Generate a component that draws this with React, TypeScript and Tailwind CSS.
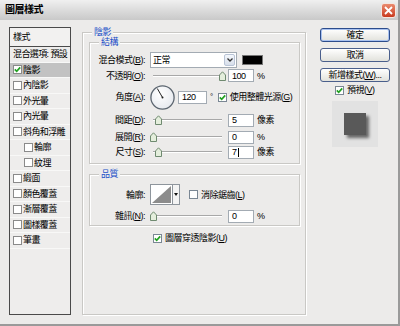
import type { ReactNode } from 'react';

function Key({ k }: { k: string }) {
  return (
    <>
      (<span className="underline">{k}</span>)
    </>
  );
}

function Check({ checked, className = '' }: { checked?: boolean; className?: string }) {
  return (
    <span className={`flex h-[9px] w-[9px] shrink-0 items-center justify-center border border-[#7A8794] bg-white ${className}`}>
      {checked && (
        <svg width="7" height="7" viewBox="0 0 7 7">
          <path d="M0.8 3.4 L2.7 5.3 L6.2 1.4" fill="none" stroke="#21A121" strokeWidth="1.7" />
        </svg>
      )}
    </span>
  );
}

function Thumb({ left }: { left: number }) {
  return (
    <svg className="absolute top-[2px]" style={{ left }} width="7" height="10" viewBox="0 0 7 10">
      <path d="M0.5 9.5 V4 L3.5 0.8 L6.5 4 V9.5 Z" fill="#E4EEDC" stroke="#6F8A70" />
    </svg>
  );
}

function Slider({ pos }: { pos: number }) {
  return (
    <div className="relative h-[14px] w-[74px] shrink-0">
      <div className="absolute left-[3px] right-[2px] top-[6px] h-[2px] border-t border-b border-t-[#A8A8A8] border-b-white" />
      <Thumb left={pos} />
    </div>
  );
}

function Field({ value, w = 'w-[26px]', caret }: { value: string; w?: string; caret?: boolean }) {
  return (
    <div className={`flex h-[13px] shrink-0 items-center border border-[#A3ABB3] bg-white pl-[3px] text-[9px] ${w}`}>
      {value}
      {caret && <span className="ml-[1px] h-[9px] w-px bg-black" />}
    </div>
  );
}

function Label({ children }: { children: ReactNode }) {
  return <div className="w-[56px] shrink-0 whitespace-nowrap pr-[1px] text-right">{children}</div>;
}

function SliderRow({ label, pos, value, unit, h, caret }: { label: ReactNode; pos: number; value: string; unit: string; h: string; caret?: boolean }) {
  return (
    <div className={`flex items-center ${h}`}>
      <Label>{label}</Label>
      <div className="ml-[4px]">
        <Slider pos={pos} />
      </div>
      <div className="ml-[4px]">
        <Field value={value} caret={caret} />
      </div>
      <span className="ml-[3px]">{unit}</span>
    </div>
  );
}

function Group({ title, className, children }: { title: string; className: string; children: ReactNode }) {
  return (
    <div className={`relative shrink-0 border border-[#C9C8C5] shadow-[inset_1px_1px_0_#fff,1px_1px_0_#fff] ${className}`}>
      <span className="absolute left-[9px] top-[-7px] bg-[#ECEBEA] px-[2px] leading-[12px] text-[#2150C8]">{title}</span>
      {children}
    </div>
  );
}

function Dial() {
  return (
    <svg width="25" height="25" viewBox="0 0 25 25" className="shrink-0">
      <defs>
        <radialGradient id="dialFill" cx="0.4" cy="0.35" r="0.7">
          <stop offset="0" stopColor="#ffffff" />
          <stop offset="1" stopColor="#E6E9EE" />
        </radialGradient>
      </defs>
      <circle cx="12.5" cy="12.5" r="11.6" fill="url(#dialFill)" stroke="#5C6670" strokeWidth="1.3" />
      <line x1="12.5" y1="12.5" x2="7.3" y2="3.5" stroke="#222" strokeWidth="1" />
      <circle cx="12.5" cy="12.5" r="1" fill="#222" />
    </svg>
  );
}

const styles: { name: string; checked?: boolean; indent?: boolean; selected?: boolean; plain?: boolean }[] = [
  { name: '混合選項: 預設', plain: true },
  { name: '陰影', checked: true, selected: true },
  { name: '內陰影' },
  { name: '外光暈' },
  { name: '內光暈' },
  { name: '斜角和浮雕' },
  { name: '輪廓', indent: true },
  { name: '紋理', indent: true },
  { name: '緞面' },
  { name: '顏色覆蓋' },
  { name: '漸層覆蓋' },
  { name: '圖樣覆蓋' },
  { name: '筆畫' },
];

function Button({ children, main }: { children: ReactNode; main?: boolean }) {
  return (
    <div
      className={`flex h-[14px] items-center justify-center rounded-[3px] border bg-gradient-to-b from-white to-[#E2E2DC] text-[9px] leading-none ${
        main ? 'border-[#2C4C8C] shadow-[inset_0_0_0_1px_#A9C2F0]' : 'border-[#4A5F8C]'
      }`}
    >
      {children}
    </div>
  );
}

export default function App() {
  return (
    <div className="flex h-[326px] w-[400px] flex-col overflow-hidden border-r-[2px] border-b-[2px] border-r-[#9A9A9A] border-b-[#9A9A9A] bg-[#ECEBEA] font-['Liberation_Sans','Noto_Sans_CJK_TC',sans-serif] text-[9px] leading-[12px] tracking-[-0.5px] text-black">
      {/* title bar */}
      <div className="flex h-[20px] shrink-0 items-center justify-between bg-gradient-to-b from-[#F0F0F0] via-[#DCDCDC] to-[#C9C9C9] pl-[5px] pr-[2px]">
        <span className="text-[10px] font-bold tracking-[-0.5px]">圖層樣式</span>
        <div className="flex h-[15px] w-[15px] items-center justify-center rounded-[3px] border border-[#F4E6E0] bg-gradient-to-b from-[#E98A6E] to-[#C8381C]">
          <svg width="9" height="9" viewBox="0 0 9 9">
            <path d="M1 1 L8 8 M8 1 L1 8" stroke="#fff" strokeWidth="1.8" />
          </svg>
        </div>
      </div>

      <div className="flex flex-1">
        {/* styles list */}
        <div className="ml-[9px] mt-[7px] h-[288px] w-[62px] shrink-0 overflow-hidden border border-[#4A4A4A] bg-[#EEEDEC]">
          <div className="flex h-[19px] items-center border-b border-[#4A4A4A] bg-[#F2F1F0] pl-[3px]">樣式</div>
          {styles.map((s) => (
            <div
              key={s.name}
              className={`flex h-[15.5px] items-center overflow-hidden whitespace-nowrap border-b border-[#F8F8F7] tracking-[-0.6px] ${s.selected ? 'bg-[#C2C2C2]' : ''} ${
                s.plain ? 'pl-[3px]' : s.indent ? 'pl-[14px]' : 'pl-[3px]'
              }`}
            >
              {!s.plain && <Check checked={s.checked} className="mr-[1px] border-[#8A8A8A]" />}
              <span>{s.name}</span>
            </div>
          ))}
        </div>

        {/* main panel */}
        <Group title="陰影" className="ml-[11px] mt-[12px] h-[283px] w-[224px]">
          <Group title="結構" className="ml-[6px] mt-[9px] h-[122px] w-[211px]">
            <div className="flex flex-col pt-[9px]">
              <div className="flex h-[16px] items-center">
                <Label>
                  混合模式<Key k="B" />:
                </Label>
                <div className="ml-[4px] flex h-[16px] w-[87px] items-center border border-[#A3ABB3] bg-white pl-[2px]">
                  <span className="flex-1">正常</span>
                  <div className="mr-px flex h-[12px] w-[11px] items-center justify-center rounded-[2px] border border-[#B9C4D6] bg-gradient-to-b from-[#F4F7FC] to-[#D7DEEA]">
                    <svg width="6" height="4" viewBox="0 0 6 4">
                      <path d="M0.5 0.5 L3 3 L5.5 0.5" fill="none" stroke="#333" strokeWidth="1.3" />
                    </svg>
                  </div>
                </div>
                <div className="ml-[5px] h-[10px] w-[21px] border border-[#777] bg-black" />
              </div>
              <SliderRow label={<>不透明<Key k="O" />:</>} pos={69} value="100" unit="%" h="h-[15px]" />
              <div className="flex h-[28px] items-center">
                <Label>
                  角度<Key k="A" />:
                </Label>
                <div className="ml-[4px]">
                  <Dial />
                </div>
                <div className="ml-[3px]">
                  <Field value="120" w="w-[29px]" />
                </div>
                <span className="ml-[3px] self-start pt-[8px] text-[8px]">°</span>
                <Check checked className="ml-[5px]" />
                <span className="ml-[3px] whitespace-nowrap">
                  使用整體光源<Key k="G" />
                </span>
              </div>
              <SliderRow label={<>間距<Key k="D" />:</>} pos={5} value="5" unit="像素" h="h-[18px]" />
              <SliderRow label={<>展開<Key k="R" />:</>} pos={0} value="0" unit="%" h="h-[16px]" />
              <SliderRow label={<>尺寸<Key k="S" />:</>} pos={5} value="7" unit="像素" h="h-[14px]" caret />
            </div>
          </Group>

          <Group title="品質" className="ml-[6px] mt-[10px] h-[52px] w-[211px]">
            <div className="flex flex-col pt-[9px]">
              <div className="flex h-[21px] items-center">
                <Label>輪廓:</Label>
                <div className="ml-[4px] flex h-[21px] w-[30px] border border-[#8E959C] bg-white">
                  <svg width="21" height="19" viewBox="0 0 21 19" className="shrink-0">
                    <path d="M1 18 L20 1 L20 18 Z" fill="#8C8C8C" />
                  </svg>
                  <div className="flex flex-1 items-center justify-center border-l border-[#8E959C] bg-[#F4F4F4]">
                    <svg width="4" height="3" viewBox="0 0 4 3">
                      <path d="M0 0 H4 L2 3 Z" fill="#111" />
                    </svg>
                  </div>
                </div>
                <Check className="ml-[9px]" />
                <span className="ml-[3px] whitespace-nowrap">
                  消除鋸齒<Key k="L" />
                </span>
              </div>
              <div className="mt-[4px]">
                <SliderRow label={<>雜訊<Key k="N" />:</>} pos={0} value="0" unit="%" h="h-[14px]" />
              </div>
            </div>
          </Group>

          <div className="ml-[70px] mt-[5px] flex h-[14px] items-center">
            <Check checked />
            <span className="ml-[3px] whitespace-nowrap">
              圖層穿透陰影<Key k="U" />
            </span>
          </div>
        </Group>

        {/* buttons */}
        <div className="ml-[14px] mt-[8px] flex w-[70px] shrink-0 flex-col gap-[6px]">
          <Button main>確定</Button>
          <Button>取消</Button>
          <Button>
            新增樣式<Key k="W" />...
          </Button>
          <div className="-mt-[5px] flex h-[14px] items-center pl-[15px]">
            <Check checked />
            <span className="ml-[3px]">
              預視<Key k="V" />
            </span>
          </div>
          <div className="-mt-[2px] ml-[12px] flex h-[46px] w-[46px] items-center justify-center bg-[#E2E2E2]">
            <div className="h-[22px] w-[22px] bg-[#595959] shadow-[3px_3px_3px_rgba(0,0,0,0.55)]" />
          </div>
        </div>
      </div>
    </div>
  );
}
